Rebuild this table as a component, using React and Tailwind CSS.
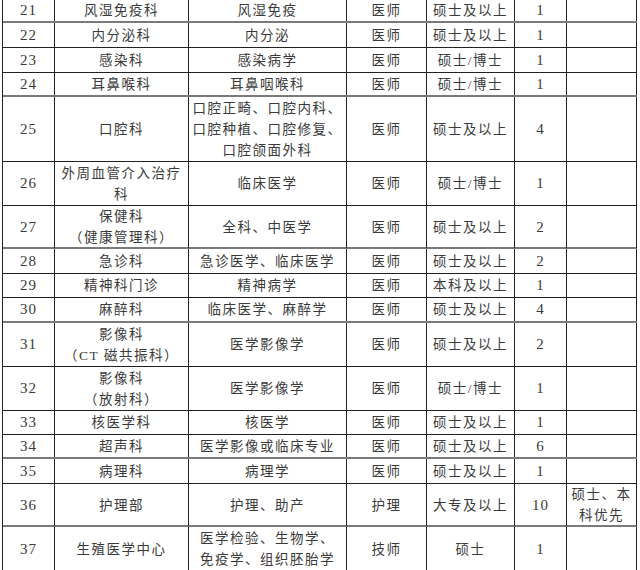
import React from 'react';

// [序号, 科室, 专业, 类别, 学历, 人数, 备注, 行高, 下边线]
const rows = [
  ['21', '风湿免疫科', '风湿免疫', '医师', '硕士及以上', '1', '', 23, 'gray'],
  ['22', '内分泌科', '内分泌', '医师', '硕士及以上', '1', '', 25, 'dark'],
  ['23', '感染科', '感染病学', '医师', '硕士/博士', '1', '', 25, 'dark'],
  ['24', '耳鼻喉科', '耳鼻咽喉科', '医师', '硕士/博士', '1', '', 24, 'gray'],
  ['25', '口腔科', '口腔正畸、口腔内科、\n口腔种植、口腔修复、\n口腔颌面外科', '医师', '硕士及以上', '4', '', 65, 'dark'],
  ['26', '外周血管介入治疗\n科', '临床医学', '医师', '硕士/博士', '1', '', 44, 'dark'],
  ['27', '保健科\n（健康管理科）', '全科、中医学', '医师', '硕士及以上', '2', '', 43, 'gray'],
  ['28', '急诊科', '急诊医学、临床医学', '医师', '硕士及以上', '2', '', 25, 'dark'],
  ['29', '精神科门诊', '精神病学', '医师', '本科及以上', '1', '', 24, 'dark'],
  ['30', '麻醉科', '临床医学、麻醉学', '医师', '硕士及以上', '4', '', 25, 'gray'],
  ['31', '影像科\n（CT 磁共振科）', '医学影像学', '医师', '硕士及以上', '2', '', 44, 'dark'],
  ['32', '影像科\n（放射科）', '医学影像学', '医师', '硕士/博士', '1', '', 44, 'dark'],
  ['33', '核医学科', '核医学', '医师', '硕士及以上', '1', '', 24, 'dark'],
  ['34', '超声科', '医学影像或临床专业', '医师', '硕士及以上', '6', '', 24, 'gray'],
  ['35', '病理科', '病理学', '医师', '硕士及以上', '1', '', 25, 'dark'],
  ['36', '护理部', '护理、助产', '护理', '大专及以上', '10', '硕士、本\n科优先', 43, 'gray'],
  ['37', '生殖医学中心', '医学检验、生物学、\n免疫学、组织胚胎学', '技师', '硕士', '1', '', 45, 'dark'],
];

function Row({ r }) {
  const [num, dept, major, type, edu, count, note, h, line] = r;
  const cells = [num, dept, major, type, edu, count, note];
  return (
    <div
      className={`grid grid-cols-[52px_134px_158px_80px_88px_52px_70px] ${
        line === 'gray' ? 'border-b-2 border-[#7a7a7a]' : 'border-b border-[#222]'
      }`}
      style={{ height: h }}
    >
      {cells.map((c, i) => (
        <div
          key={i}
          className={`flex items-center justify-center whitespace-pre-line border-r border-[#222] text-center leading-[21px] ${
            i === 0 || i === 5 ? 'text-[15px] tracking-[1px]' : 'text-[13.5px] tracking-[1.5px]'
          }`}
        >
          {c}
        </div>
      ))}
    </div>
  );
}

export default function App() {
  return (
    <div
      className="h-[570px] w-[640px] overflow-hidden bg-white text-[#3a3a3a]"
      style={{ fontFamily: '"Liberation Serif", "Noto Sans CJK SC", serif' }}
    >
      <div className="ml-[2px] w-[635px] border-l border-[#222]">
        {rows.map((r) => (
          <Row key={r[0]} r={r} />
        ))}
      </div>
    </div>
  );
}
